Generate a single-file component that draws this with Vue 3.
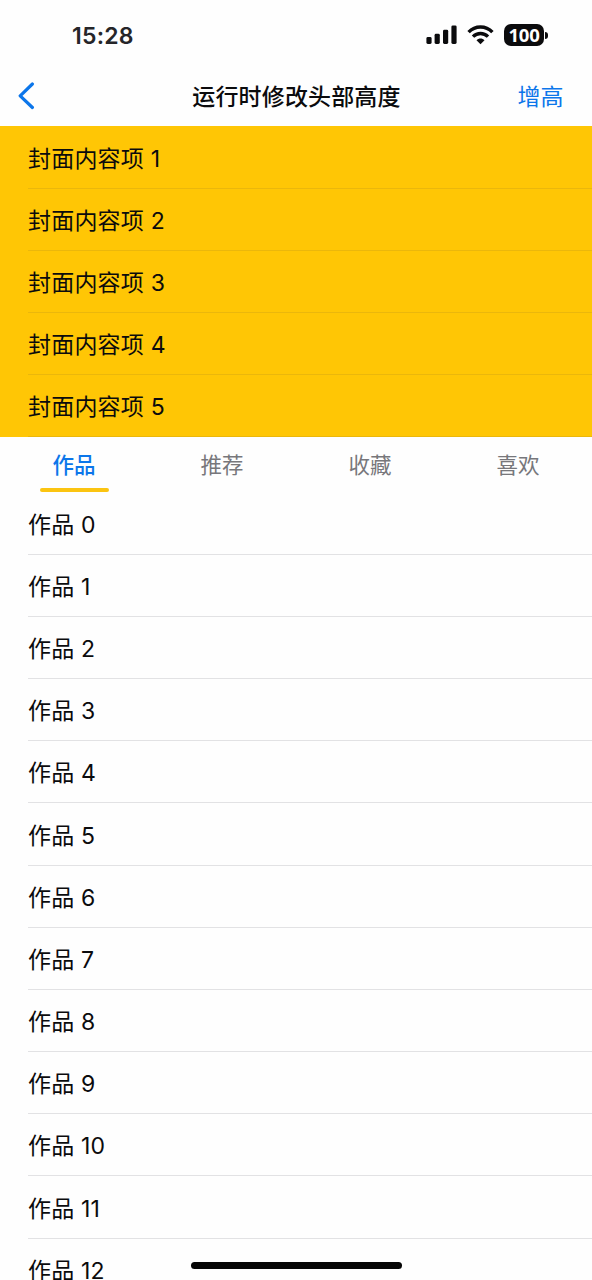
<script setup>
import { ref } from 'vue'

const covers = [1, 2, 3, 4, 5]
const tabs = ['作品', '推荐', '收藏', '喜欢']
const active = ref(0)
const works = Array.from({ length: 13 }, (_, i) => i)
</script>

<template>
  <div class="screen">
    <header class="status">
      <span class="time">15:28</span>
      <div class="indicators">
        <svg class="signal" width="31" height="20" viewBox="0 0 31 20">
          <rect x="0.4" y="12" width="5.2" height="7" rx="1.4" />
          <rect x="8.6" y="8.8" width="5.2" height="10.2" rx="1.4" />
          <rect x="17" y="4.8" width="5.2" height="14.2" rx="1.4" />
          <rect x="25.4" y="0.4" width="5.2" height="18.6" rx="1.4" />
        </svg>
        <svg class="wifi" width="27" height="20" viewBox="0 0 27 20">
          <path d="M1.6 7.1C8.2 .2 18.8 .2 25.4 7.1" />
          <path d="M6 11.6C10.2 7.5 16.8 7.5 21 11.6" />
          <path class="dot" d="M9.5 15.2C11.8 13 15.2 13 17.5 15.2L13.5 19.2Z" />
        </svg>
        <div class="battery">
          <span class="level">100</span>
          <i class="cap"></i>
        </div>
      </div>
    </header>
    <nav class="nav">
      <button class="back" aria-label="返回">
        <svg width="18" height="28" viewBox="0 0 18 28">
          <path d="M15.4 2L3.2 13.8L15.4 25.5" />
        </svg>
      </button>
      <h1>运行时修改头部高度</h1>
      <button class="action">增高</button>
    </nav>
    <ul class="cover">
      <li v-for="n in covers" :key="n" class="row"><span>封面内容项 {{ n }}</span></li>
    </ul>
    <div class="tabs">
      <button
        v-for="(tab, i) in tabs"
        :key="tab"
        class="tab"
        :class="{ active: active === i }"
        @click="active = i"
      >{{ tab }}</button>
    </div>
    <ul class="works">
      <li v-for="n in works" :key="n" class="row"><span>作品 {{ n }}</span></li>
    </ul>
    <div class="home"></div>
  </div>
</template>

<style>
body { background: #fefefe; }
</style>

<style scoped>
.screen {
  position: relative;
  width: 592px;
  height: 1280px;
  overflow: hidden;
  background: #fefefe;
  color: #0b0b0d;
  font-family: Inter, "Noto Sans CJK SC", sans-serif;
}
button {
  border: 0;
  padding: 0;
  background: none;
  font-family: inherit;
}
ul { list-style: none; margin: 0; padding: 0; }
.status {
  display: flex;
  justify-content: space-between;
  box-sizing: border-box;
  height: 66px;
  padding: 20px 44px 0 72px;
}
.time {
  color: #252529;
  font-size: 23px;
  font-weight: 600;
  line-height: 32px;
  letter-spacing: 0.25px;
}
.indicators {
  display: flex;
  align-items: flex-start;
  padding-top: 4px;
}
.signal { margin: 1px 10px 0 0; fill: #0b0b0d; }
.wifi {
  margin: 1px 10px 0 0;
  fill: none;
  stroke: #0b0b0d;
  stroke-width: 3.4;
}
.wifi .dot { fill: #0b0b0d; stroke: none; }
.battery { display: flex; align-items: center; }
.level {
  width: 40px;
  height: 22px;
  border-radius: 7px;
  background: #0b0b0d;
  color: #fff;
  font-family: "Open Sans", Inter, sans-serif;
  font-size: 18.5px;
  font-weight: 700;
  line-height: 22px;
  letter-spacing: -0.3px;
  text-align: center;
}
.cap {
  width: 3px;
  height: 7px;
  margin-left: 1px;
  border-radius: 0 3px 3px 0;
  background: #0b0b0d;
}
.nav {
  display: grid;
  grid-template-columns: 1fr auto 1fr;
  align-items: center;
  height: 60.4px;
  padding: 0 28.5px 0 17px;
}
.nav h1 {
  margin: 1px 0 0 12.5px;
  font-size: 23px;
  font-weight: 500;
  line-height: 32px;
  letter-spacing: 0.15px;
}
.back { justify-self: start; height: 28px; }
.back path {
  fill: none;
  stroke: #0c76ea;
  stroke-width: 3.2;
  stroke-linecap: round;
  stroke-linejoin: round;
}
.back svg { display: block; }
.action {
  justify-self: end;
  margin-top: 1px;
  color: #0c76ea;
  font-size: 23px;
  line-height: 32px;
}
.cover { background: #ffc605; }
.row {
  display: flex;
  box-sizing: border-box;
  height: 62.2px;
  padding-left: 28px;
  font-size: 23px;
  letter-spacing: 0.2px;
}
.row span {
  flex: 1;
  box-sizing: border-box;
  padding-top: 16.2px;
  border-bottom: 1px solid #e2e2e4;
  line-height: 32px;
}
.cover .row span { border-color: #ebb70b; }
.tabs { display: flex; height: 55.1px; }
.tab {
  display: flex;
  flex-direction: column;
  flex: 1;
  align-items: center;
  box-sizing: border-box;
  padding-top: 13px;
  color: #77777b;
  font-size: 21.5px;
  line-height: 30px;
}
.tab.active { color: #0c76ea; font-weight: 500; }
.tab.active::after {
  content: "";
  width: 69px;
  height: 4px;
  margin-top: 8px;
  border-radius: 2px;
  background: #fbc411;
}
.home {
  position: absolute;
  left: 191px;
  top: 1262px;
  width: 211px;
  height: 7px;
  border-radius: 4px;
  background: #050505;
}
</style>
